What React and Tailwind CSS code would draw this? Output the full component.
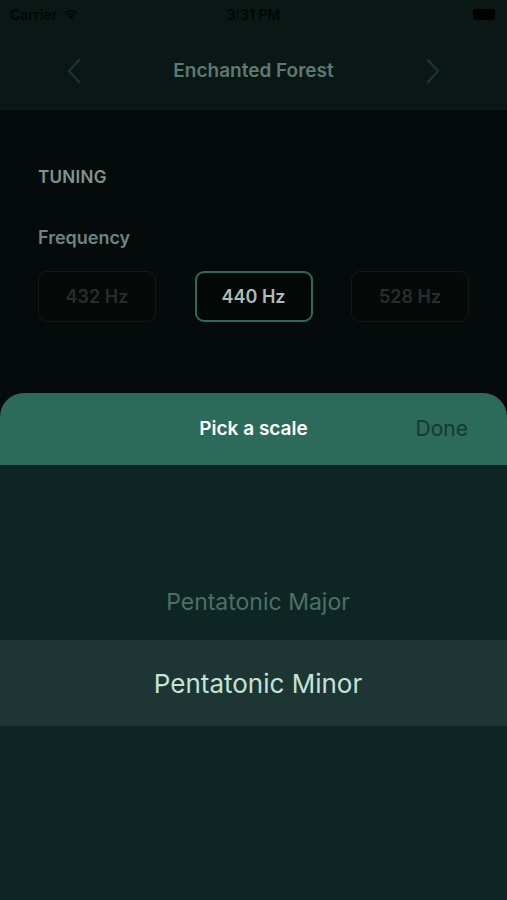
export default function App() {
  const freqs = [
    { label: "432 Hz", active: false },
    { label: "440 Hz", active: true },
    { label: "528 Hz", active: false },
  ];

  return (
    <div
      className="w-[507px] h-[900px] bg-[#050b0a] flex flex-col overflow-hidden relative"
      style={{ fontFamily: "Inter, 'Noto Sans', sans-serif" }}
    >
      {/* Header with status bar */}
      <div className="bg-[#0a1714] h-[110px] flex flex-col">
        <div className="h-[28px] flex items-center justify-between px-[10px] text-[#020605] text-[14px] font-semibold">
          <div className="flex items-center gap-[6px] w-[120px]">
            <span>Carrier</span>
            <svg width="16" height="12" viewBox="0 0 16 12" fill="#020605">
              <path d="M8 11.5 L5.6 8.8 A3.6 3.6 0 0 1 10.4 8.8 Z" />
              <path d="M3.8 6.9 A6.2 6.2 0 0 1 12.2 6.9 L11.1 8.1 A4.6 4.6 0 0 0 4.9 8.1 Z" />
              <path d="M1.6 4.6 A9.2 9.2 0 0 1 14.4 4.6 L13.3 5.8 A7.6 7.6 0 0 0 2.7 5.8 Z" />
            </svg>
          </div>
          <span>3:31 PM</span>
          <div className="w-[120px] flex justify-end pr-[2px]">
            <div className="w-[22px] h-[11px] rounded-[3px] bg-[#000201]" />
          </div>
        </div>
        <div className="flex-1 flex items-center justify-between px-[66px] pt-[4px]">
          <svg width="16" height="26" viewBox="0 0 16 26" fill="none" stroke="#1c342e" strokeWidth="2.5" strokeLinecap="round" strokeLinejoin="round">
            <path d="M13 2 L3 13 L13 24" />
          </svg>
          <span className="text-[#5d7a72] text-[19px] font-semibold">Enchanted Forest</span>
          <svg width="16" height="26" viewBox="0 0 16 26" fill="none" stroke="#1c342e" strokeWidth="2.5" strokeLinecap="round" strokeLinejoin="round">
            <path d="M3 2 L13 13 L3 24" />
          </svg>
        </div>
      </div>

      {/* Tuning section */}
      <div className="px-[38px] pt-[55px]">
        <div className="text-[#7e9590] text-[17px] font-semibold tracking-[0.3px]">TUNING</div>
        <div className="text-[#6d8580] text-[18px] font-semibold mt-[33px]">Frequency</div>
        <div className="flex justify-between mt-[20px]">
          {freqs.map((f) => (
            <div
              key={f.label}
              className={
                f.active
                  ? "w-[118px] h-[51px] rounded-[9px] border-2 border-[#2d6a58] bg-[#030807] flex items-center justify-center text-[#aebcb8] text-[18px] font-semibold"
                  : "w-[118px] h-[51px] rounded-[9px] border border-[#121a18] bg-[#050a09] flex items-center justify-center text-[#262f2d] text-[18px] font-semibold"
              }
            >
              {f.label}
            </div>
          ))}
        </div>
      </div>

      {/* Picker sheet */}
      <div className="absolute left-0 right-0 top-[393px] bottom-0 flex flex-col">
        <div className="h-[72px] bg-[#2c6a5a] rounded-t-[24px] flex items-center justify-end relative pr-[39px]">
          <span className="absolute left-0 right-0 text-center text-white text-[19px] font-semibold">
            Pick a scale
          </span>
          <span className="relative text-[#17382f] text-[21px]">Done</span>
        </div>
        <div className="flex-1 bg-[#0e2623] flex flex-col pt-[116px]">
          <div className="h-[59px] pb-[16px] pl-[9px] flex items-center justify-center text-[#4d7066] text-[23px]">
            Pentatonic Major
          </div>
          <div className="h-[86px] pl-[9px] bg-[#1d3633] flex items-center justify-center text-[#c4e2d8] text-[26px]">
            Pentatonic Minor
          </div>
        </div>
      </div>
    </div>
  );
}
